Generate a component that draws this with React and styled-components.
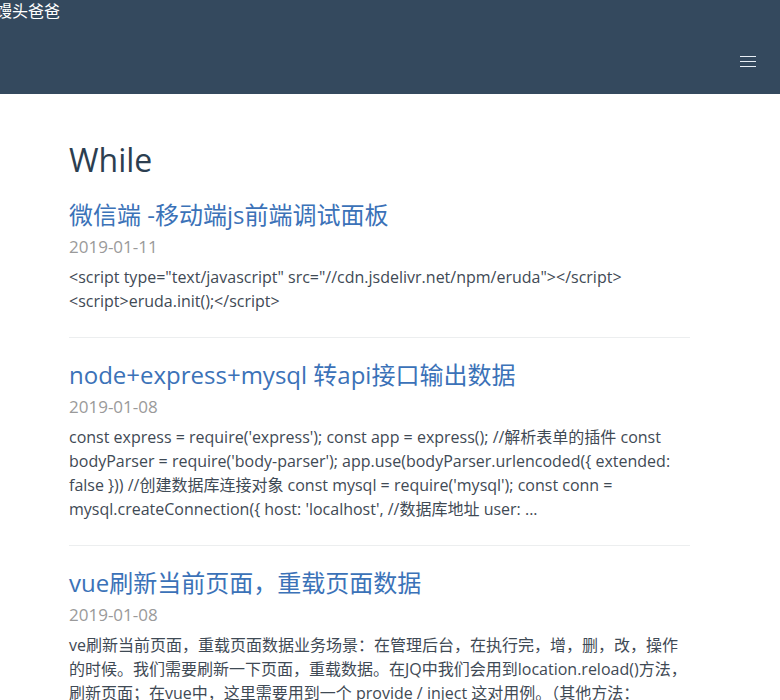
import React from 'react';
import styled, { createGlobalStyle } from 'styled-components';

const GlobalStyle = createGlobalStyle`
  html, body {
    margin: 0;
    padding: 0;
    background: #fff;
    font-family: "Open Sans", "Noto Sans CJK SC", sans-serif;
    color: #34495e;
  }
`;

const Header = styled.header`
  height: 94px;
  background: #34495e;
  display: flex;
  justify-content: space-between;
  align-items: flex-start;
  box-sizing: border-box;
`;

const Logo = styled.a`
  margin-left: -4px;
  color: #fff;
  font-size: 16px;
  line-height: 20px;
  text-decoration: none;
  font-family: "Noto Sans CJK SC", sans-serif;
`;

const MenuButton = styled.button`
  margin: 56px 24px 0 0;
  padding: 0;
  width: 16px;
  height: 11px;
  border: none;
  background: none;
  display: flex;
  flex-direction: column;
  justify-content: space-between;
  cursor: pointer;
`;

const MenuBar = styled.span`
  display: block;
  height: 1px;
  background: #e8eef5;
`;

const Main = styled.main`
  width: 621px;
  margin: 0 auto 0 69px;
  padding-top: 47px;
`;

const PageTitle = styled.h1`
  margin: 0 0 20px;
  font-size: 32px;
  line-height: 38px;
  font-weight: 400;
  color: #2c3e50;
`;

const Post = styled.article`
  padding-bottom: 24px;
  margin-bottom: 21px;
  border-bottom: 1px solid #eceeef;
`;

const PostTitle = styled.a`
  display: block;
  font-size: 24px;
  line-height: 32px;
  color: #3b72b8;
  text-decoration: none;
`;

const PostDate = styled.div`
  margin-top: 4px;
  font-size: 17px;
  line-height: 24px;
  color: #9a9a9a;
`;

const Excerpt = styled.p`
  margin: 6px 0 0;
  font-size: 16px;
  line-height: 24px;
  color: #3f4a55;
`;

const posts = [
  {
    title: '微信端 -移动端js前端调试面板',
    date: '2019-01-11',
    excerpt:
      '<script type="text/javascript" src="//cdn.jsdelivr.net/npm/eruda"></script> <script>eruda.init();</script>',
  },
  {
    title: 'node+express+mysql 转api接口输出数据',
    date: '2019-01-08',
    excerpt:
      "const express = require('express'); const app = express(); //解析表单的插件 const bodyParser = require('body-parser'); app.use(bodyParser.urlencoded({ extended: false })) //创建数据库连接对象 const mysql = require('mysql'); const conn = mysql.createConnection({ host: 'localhost', //数据库地址 user: ...",
  },
  {
    title: 'vue刷新当前页面，重载页面数据',
    date: '2019-01-08',
    excerpt:
      've刷新当前页面，重载页面数据业务场景：在管理后台，在执行完，增，删，改，操作的时候。我们需要刷新一下页面，重载数据。在JQ中我们会用到location.reload()方法，刷新页面；在vue中，这里需要用到一个 provide / inject 这对用例。（其他方法：',
  },
];

export default function App() {
  return (
    <>
      <GlobalStyle />
      <Header>
        <Logo href="#">馒头爸爸</Logo>
        <MenuButton aria-label="menu">
          <MenuBar />
          <MenuBar />
          <MenuBar />
        </MenuButton>
      </Header>
      <Main>
        <PageTitle>While</PageTitle>
        {posts.map((p) => (
          <Post key={p.title}>
            <PostTitle href="#">{p.title}</PostTitle>
            <PostDate>{p.date}</PostDate>
            <Excerpt>{p.excerpt}</Excerpt>
          </Post>
        ))}
      </Main>
    </>
  );
}
